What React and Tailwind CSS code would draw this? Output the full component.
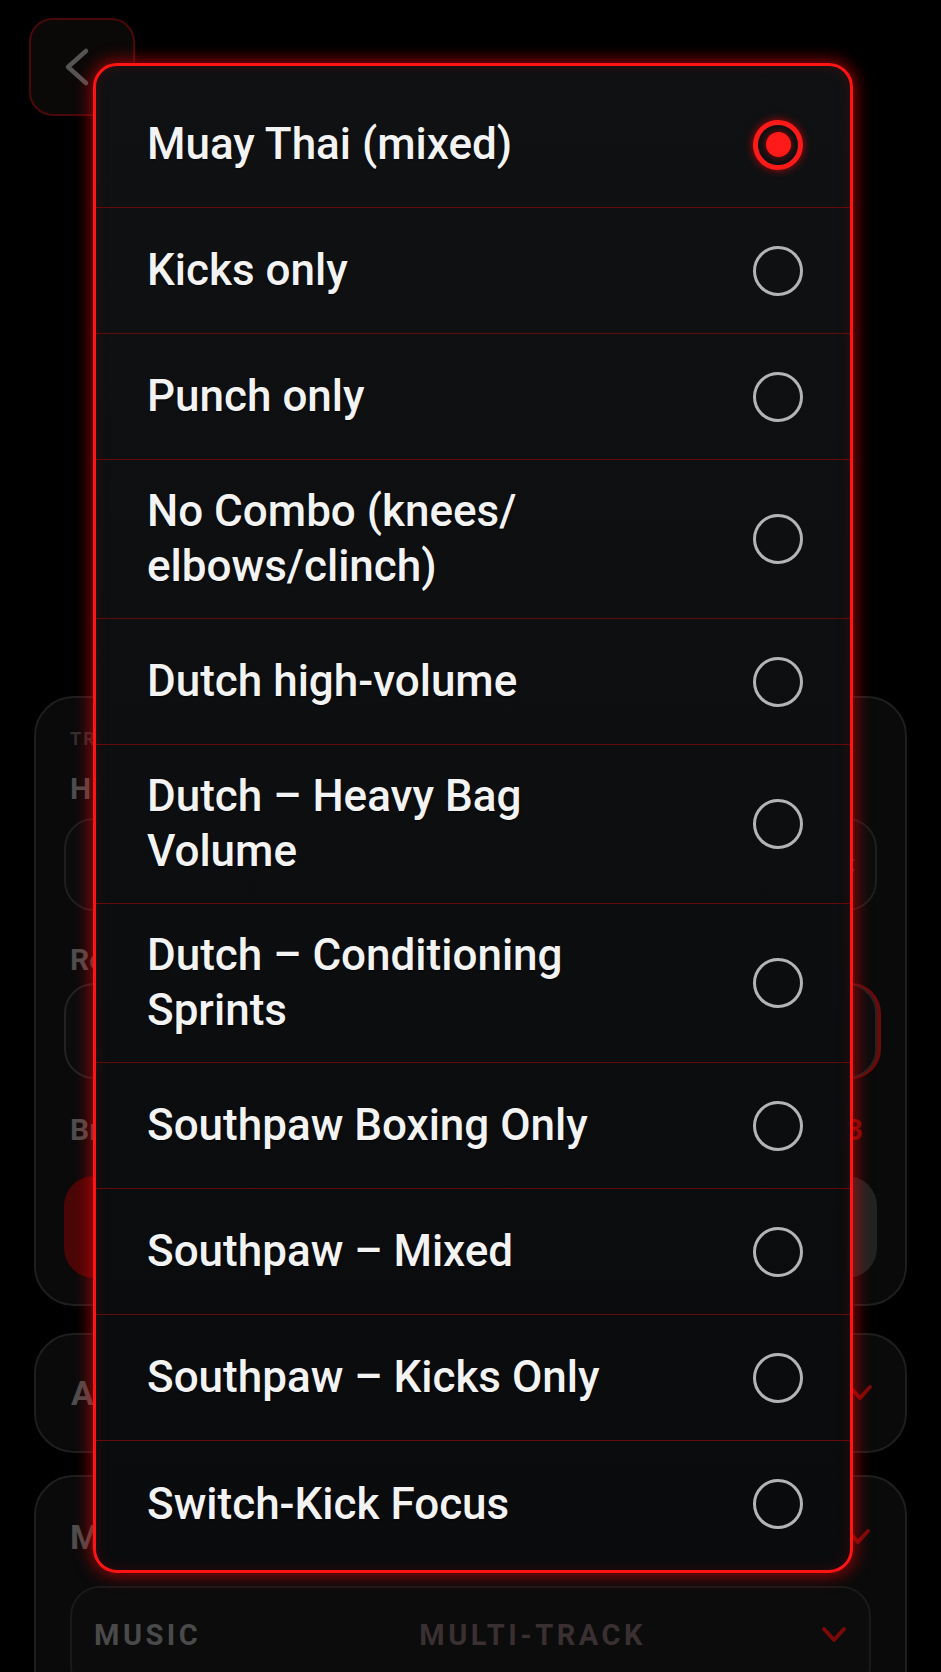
import { useState } from 'react'

const OPTIONS = [
  { id: 'mixed', lines: ['Muay Thai (mixed)'] },
  { id: 'kicks', lines: ['Kicks only'] },
  { id: 'punch', lines: ['Punch only'] },
  { id: 'nocombo', lines: ['No Combo (knees/', 'elbows/clinch)'] },
  { id: 'dutch', lines: ['Dutch high-volume'] },
  { id: 'dutch-bag', lines: ['Dutch – Heavy Bag', 'Volume'] },
  { id: 'dutch-cond', lines: ['Dutch – Conditioning', 'Sprints'] },
  { id: 'sp-boxing', lines: ['Southpaw Boxing Only'] },
  { id: 'sp-mixed', lines: ['Southpaw – Mixed'] },
  { id: 'sp-kicks', lines: ['Southpaw – Kicks Only'] },
  { id: 'switch', lines: ['Switch-Kick Focus'] },
]

const font = { fontFamily: 'Roboto, "Liberation Sans", sans-serif' }

function Radio({ checked }) {
  if (checked) {
    return (
      <div className="w-[50px] h-[50px] shrink-0 rounded-full border-[5px] border-[#ff1a1a] flex items-center justify-center shadow-[0_0_8px_rgba(255,0,0,0.7)]">
        <div className="w-[25px] h-[25px] rounded-full bg-[#ff1a1a] shadow-[0_0_6px_rgba(255,0,0,0.6)]" />
      </div>
    )
  }
  return <div className="w-[50px] h-[50px] shrink-0 rounded-full border-[3px] border-[#b4b4b4]" />
}

function Label({ children, className = '' }) {
  return (
    <div className={`h-[34px] flex items-center pl-[6px] text-[30px] font-bold text-[#4d4d4d] ${className}`}>
      {children}
    </div>
  )
}

function RedChevron({ className = '' }) {
  return (
    <svg width="26" height="18" viewBox="0 0 26 18" className={className}>
      <path d="M3 3 L13 14 L23 3" fill="none" stroke="#7a0a0a" strokeWidth="4" strokeLinecap="round" strokeLinejoin="round" />
    </svg>
  )
}

export default function App() {
  const [selected, setSelected] = useState('mixed')

  return (
    <div className="relative w-full min-h-[1672px] h-[1672px] bg-black overflow-hidden" style={font}>
      {/* page behind the menu */}
      <div className="pl-[29px] pt-[18px]">
        <div className="w-[106px] h-[98px] rounded-[24px] border-2 border-[#4a0808] bg-[#0b0808] flex items-center pl-[33px]">
          <svg width="26" height="40" viewBox="0 0 26 40">
            <path d="M22 4 L4 20 L22 36" fill="none" stroke="#555" strokeWidth="4.5" strokeLinecap="round" strokeLinejoin="round" />
          </svg>
        </div>
      </div>

      <div className="mt-[580px] px-[34px] flex flex-col">
        <div className="rounded-[40px] border-2 border-[#1e1e1e] bg-[#0a0a0b] pt-[27px] pb-[26px] px-[28px] flex flex-col">
          <div className="h-[26px] flex items-center pl-[6px] text-[18px] font-bold tracking-[2px] text-[#2f2f2f]">TRAINING</div>
          <Label className="mt-[20px]">Hits</Label>
          <div className="mt-[13px] h-[93px] rounded-[30px] border-2 border-[#1f1f1f] bg-[#0c0c0d] flex items-center justify-end pr-[18px]">
            <svg width="22" height="34" viewBox="0 0 22 34">
              <path d="M4 12 L11 5 L18 12 M4 22 L11 29 L18 22" fill="none" stroke="#333" strokeWidth="3" strokeLinecap="round" strokeLinejoin="round" />
            </svg>
          </div>
          <Label className="mt-[31px]">Rounds</Label>
          <div className="mt-[7px] h-[96px] rounded-[30px] border-2 border-[#232323] bg-[#0c0c0d] shadow-[4px_0_0_0_#6a0a0a]" />
          <div className="mt-[28px] flex items-center justify-between pr-[14px]">
            <Label>Break</Label>
            <span className="text-[30px] font-bold text-[#7a0a0a]">3</span>
          </div>
          <div className="mt-[24px] h-[102px] flex gap-[16px]">
            <div className="flex-1 rounded-[30px] bg-[#4a0606]" />
            <div className="flex-1 rounded-[30px] bg-[#232323]" />
          </div>
        </div>

        <div className="mt-[27px] h-[120px] rounded-[40px] border-2 border-[#1e1e1e] bg-[#0a0a0b] flex items-center justify-between pl-[29px] pr-[32px]">
          <span className="text-[34px] font-bold text-[#4d4d4d] pl-[6px]">Audio</span>
          <RedChevron />
        </div>

        <div className="mt-[22px] rounded-[40px] border-2 border-[#1e1e1e] bg-[#0a0a0b] pt-[43px] px-[34px] pb-[20px] flex flex-col">
          <div className="flex items-center justify-between">
            <span className="h-[34px] flex items-center text-[34px] font-bold text-[#4d4d4d]">Mix</span>
            <RedChevron />
          </div>
          <div className="mt-[32px] h-[110px] rounded-[30px] border-2 border-[#1a1a1a] bg-[#0c0c0d] flex items-start pt-[26px] pl-[22px] pr-[22px]">
            <span className="text-[29px] font-bold tracking-[3.5px] text-[#4a4a4a]">MUSIC</span>
            <span className="ml-[218px] text-[29px] font-bold tracking-[3.5px] text-[#3a3032]">MULTI-TRACK</span>
            <span className="ml-auto mt-[12px]"><RedChevron /></span>
          </div>
        </div>
      </div>

      {/* dropdown menu */}
      <div className="absolute left-[93px] top-[63px] w-[760px] rounded-[24px] border-[3px] border-[#ff1414] bg-gradient-to-b from-[#0f1113] to-[#0a0b0d] pt-[16px] pb-[3px] shadow-[0_0_16px_3px_rgba(255,0,0,0.55),inset_0_0_14px_rgba(255,0,0,0.15)]">
        {OPTIONS.map((opt, i) => (
          <button
            key={opt.id}
            onClick={() => setSelected(opt.id)}
            className={`w-full flex items-center justify-between min-h-[126px] py-[24px] pl-[51px] pr-[47px] text-left ${i < OPTIONS.length - 1 ? 'border-b border-[#650a0a]' : ''}`}
          >
            <span className="text-[44px] leading-[55px] font-medium text-[#f3f3f3] [text-shadow:0_1px_2px_rgba(0,0,0,0.7)]">
              {opt.lines.map((l, j) => (
                <span key={j} className="block whitespace-nowrap">{l}</span>
              ))}
            </span>
            <Radio checked={selected === opt.id} />
          </button>
        ))}
      </div>
    </div>
  )
}
